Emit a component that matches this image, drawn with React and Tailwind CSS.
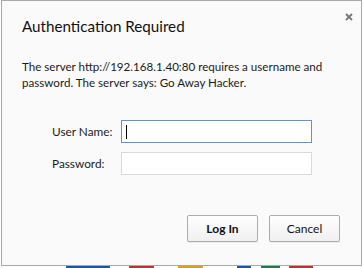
import React from 'react';

const App = () => {
    return (
        <div className="relative w-[363px] h-[268px] bg-white overflow-hidden" style={{ fontFamily: 'Lato, "Noto Sans", sans-serif' }}>
            {/* page behind the dialog */}
            <div className="absolute left-0 right-0 top-[266px] h-[2px]">
                <div className="absolute left-[66px] w-[44px] h-full bg-[#1a57a8]" />
                <div className="absolute left-[129px] w-[25px] h-full bg-[#b8372c]" />
                <div className="absolute left-[178px] w-[25px] h-full bg-[#d9a21b]" />
                <div className="absolute left-[237px] w-[14px] h-full bg-[#1a57a8]" />
                <div className="absolute left-[261px] w-[19px] h-full bg-[#1e7d3e]" />
                <div className="absolute left-[289px] w-[24px] h-full bg-[#b8372c]" />
            </div>

            {/* Dialog */}
            <div className="relative ml-[1px] w-[361px] h-[266px] bg-[#fafafa] border border-[#a8a8a8] flex flex-col text-[#1b1b1b]">
                <button className="absolute top-[10px] right-[6px] w-[12px] h-[12px] flex items-center justify-center">
                    <svg width="8" height="8" viewBox="0 0 8 8">
                        <path d="M1 1 L7 7 M7 1 L1 7" stroke="#777" strokeWidth="1.8" />
                    </svg>
                </button>

                <h1 className="ml-[20px] mt-[14px] text-[15.2px] leading-[22px] text-[#111]">Authentication Required</h1>

                <p className="ml-[20px] mt-[22px] w-[320px] text-[11.6px] leading-[16px]">
                    The server http://192.168.1.40:80 requires a username and password. The server says: Go Away Hacker.
                </p>

                <div className="mt-[29px] grid grid-cols-[69px_191px] gap-y-[9px] ml-[50px] items-center text-[11.8px]">
                    <label>User Name:</label>
                    <div className="h-[23px] bg-white border border-[#5b93e0] flex items-center pl-[4px]">
                        <span className="w-px h-[14px] bg-black" />
                    </div>
                    <label>Password:</label>
                    <div className="h-[23px] bg-white border border-[#d9d9d9]" />
                </div>

                <div className="mt-auto mb-[23px] mr-[21px] flex justify-end gap-[11px]">
                    <button className="w-[71px] h-[27px] rounded-[2px] border border-[#acacac] bg-gradient-to-b from-[#fefefe] to-[#f0f0f0] text-[12px] font-bold text-[#111] shadow-[0_1px_0_rgba(0,0,0,0.06)]">Log In</button>
                    <button className="w-[71px] h-[27px] rounded-[2px] border border-[#acacac] bg-gradient-to-b from-[#fefefe] to-[#f0f0f0] text-[12px] text-[#111] shadow-[0_1px_0_rgba(0,0,0,0.06)]">Cancel</button>
                </div>
            </div>
        </div>
    );
};

export default App;
